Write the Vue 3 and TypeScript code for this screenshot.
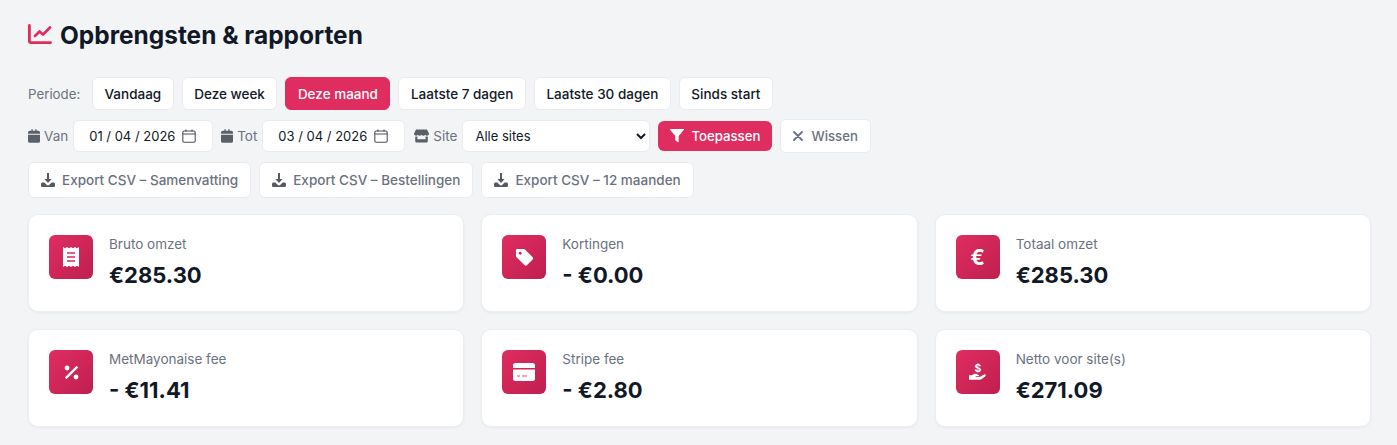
<script setup lang="ts">
const periods = [
  { label: 'Vandaag', active: false },
  { label: 'Deze week', active: false },
  { label: 'Deze maand', active: true },
  { label: 'Laatste 7 dagen', active: false },
  { label: 'Laatste 30 dagen', active: false },
  { label: 'Sinds start', active: false },
]

const exports = ['Export CSV – Samenvatting', 'Export CSV – Bestellingen', 'Export CSV – 12 maanden']

const stats = [
  { key: 'receipt', label: 'Bruto omzet', value: '€285.30' },
  { key: 'tag', label: 'Kortingen', value: '- €0.00' },
  { key: 'euro', label: 'Totaal omzet', value: '€285.30' },
  { key: 'percent', label: 'MetMayonaise fee', value: '- €11.41' },
  { key: 'card', label: 'Stripe fee', value: '- €2.80' },
  { key: 'hand', label: 'Netto voor site(s)', value: '€271.09' },
]
</script>

<template>
  <div class="page">
    <h1 class="title">
      <svg class="title-icon" viewBox="0 0 24 20" fill="none" stroke="currentColor" stroke-width="2.8" stroke-linecap="round" stroke-linejoin="round">
        <path d="M1.4 1.4v15.7a1.5 1.5 0 0 0 1.5 1.5h19.7" />
        <path d="M7 12l4.5-4.5 3.5 3 7-7" />
      </svg>
      Opbrengsten &amp; rapporten
    </h1>

    <div class="row period-row">
      <span class="muted">Periode:</span>
      <button v-for="p in periods" :key="p.label" class="pill" :class="{ active: p.active }">{{ p.label }}</button>
    </div>

    <div class="row filter-row">
      <label class="field-label">
        <svg class="label-icon" viewBox="0 0 14 16" fill="currentColor"><path d="M4 0h1.5v2h3V0H10v2h2a2 2 0 0 1 2 2v1.5H0V4a2 2 0 0 1 2-2h2zM0 6.5h14V14a2 2 0 0 1-2 2H2a2 2 0 0 1-2-2z" /></svg>
        Van
      </label>
      <div class="date-input">
        <span>01 / 04 / 2026</span>
        <svg class="cal" viewBox="0 0 14 14" fill="none" stroke="currentColor" stroke-width="1.1"><rect x="0.8" y="2" width="12.4" height="11.2" rx="1.4" /><path d="M0.8 5h12.4M4 0.5V2.5M10 0.5V2.5" /></svg>
      </div>
      <label class="field-label">
        <svg class="label-icon" viewBox="0 0 14 16" fill="currentColor"><path d="M4 0h1.5v2h3V0H10v2h2a2 2 0 0 1 2 2v1.5H0V4a2 2 0 0 1 2-2h2zM0 6.5h14V14a2 2 0 0 1-2 2H2a2 2 0 0 1-2-2z" /></svg>
        Tot
      </label>
      <div class="date-input narrow">
        <span>03 / 04 / 2026</span>
        <svg class="cal" viewBox="0 0 14 14" fill="none" stroke="currentColor" stroke-width="1.1"><rect x="0.8" y="2" width="12.4" height="11.2" rx="1.4" /><path d="M0.8 5h12.4M4 0.5V2.5M10 0.5V2.5" /></svg>
      </div>
      <label class="field-label">
        <svg class="label-icon store" viewBox="0 0 16 14" fill="currentColor"><path d="M2.2 0h11.6L16 4.2C16 5.6 15 6.6 13.8 6.6c-.8 0-1.4-.4-1.9-1-.4.6-1.100 1-1.900 1s-1.500-.4-2-1c-.5.6-1.200 1-2 1s-1.500-.4-1.900-1c-.5.6-1.100 1-1.900 1C1 6.6 0 5.6 0 4.200zM1.300 7.600c.3.100.6.100.9.100.5 0 1-.1 1.400-.4v3.200h8.800V7.300c.4.300.9.400 1.400.4.300 0 .6 0 .9-.1v4.900a1.500 1.500 0 0 1-1.500 1.500H2.800a1.500 1.500 0 0 1-1.500-1.500z" /></svg>
        Site
      </label>
      <select class="select-box">
        <option>Alle sites</option>
      </select>
      <button class="apply">
        <svg class="btn-icon" viewBox="0 0 14 14" fill="currentColor"><path d="M.4 0h13.200c.4 0 .5.400.3.700L8.700 7v5.800c0 .4-.4.600-.7.400l-2.400-1.700a.6.600 0 0 1-.3-.5V7L.1.700C-.1.400 0 0 .4 0z" /></svg>
        Toepassen
      </button>
      <button class="clear">
        <svg class="x-icon" viewBox="0 0 10 10" fill="none" stroke="currentColor" stroke-width="1.8" stroke-linecap="round"><path d="M1 1l8 8M9 1l-8 8" /></svg>
        Wissen
      </button>
    </div>

    <div class="row export-row">
      <button v-for="e in exports" :key="e" class="export">
        <svg class="dl-icon" viewBox="0 0 14 14" fill="currentColor"><path d="M6 0h2v6h2.600L7 10 3.400 6H6z" /><path d="M0 11.200C0 10.300.7 9.600 1.600 9.600h1.800l2.200 2.100a2 2 0 0 0 2.800 0l2.200-2.100h1.800c.9 0 1.600.7 1.600 1.600v1.200c0 .9-.7 1.600-1.600 1.600H1.600C.7 14 0 13.300 0 12.400z" /></svg>
        {{ e }}
      </button>
    </div>

    <div class="stats">
      <div v-for="s in stats" :key="s.label" class="card">
        <div class="stat-icon">
          <svg v-if="s.key === 'receipt'" class="glyph receipt" viewBox="0 0 16 20"><path fill="#fff" d="M0 0l2 1.200L4 0l2 1.200L8 0l2 1.200L12 0l2 1.200L16 0v20l-2-1.200L12 20l-2-1.200L8 20l-2-1.200L4 20l-2-1.200L0 20z" /><path stroke="#d42a5e" stroke-width="1.4" d="M4 6h8M4 10h8M4 14h8" /></svg>
          <svg v-else-if="s.key === 'tag'" class="glyph tag" viewBox="0 0 20 20"><path fill="#fff" d="M1 2.500A1.500 1.500 0 0 1 2.500 1h6.700c.5 0 1 .2 1.300.6l7.900 7.900a2 2 0 0 1 0 2.800l-5.700 5.700a2 2 0 0 1-2.800 0L1.600 9.700A2 2 0 0 1 1 8.300z" /><circle cx="5.5" cy="5.500" r="1.5" fill="#d42a5e" /></svg>
          <span v-else-if="s.key === 'euro'" class="euro">€</span>
          <svg v-else-if="s.key === 'percent'" class="glyph percent" viewBox="0 0 15 15" fill="#fff"><circle cx="3" cy="3" r="2.4" /><circle cx="12" cy="12" r="2.4" /><path d="M12.600 0.800l1.600 1.600L2.400 14.200.8 12.600z" /></svg>
          <svg v-else-if="s.key === 'card'" class="glyph wide" viewBox="0 0 22 18"><path fill="#fff" d="M2.500 0h17A2.500 2.500 0 0 1 22 2.500V5H0V2.500A2.500 2.500 0 0 1 2.500 0zM0 6.500h22v9a2.500 2.500 0 0 1-2.500 2.500h-17A2.500 2.500 0 0 1 0 15.500z" /><path stroke="#e58aa6" stroke-width="1.5" d="M4 13h3M9 13h5" /></svg>
          <svg v-else class="glyph wide" viewBox="0 0 22 20" fill="#fff">
            <path d="M1 13.500h3.200l2.300-1.200c.9-.5 1.900-.5 2.800-.1l2.500 1c.8.300.6 1.600-.4 1.600H8.500v.8h4.200l5-2.800c1.200-.7 2.800.8 1.500 2l-4.500 3.200c-.5.300-1 .5-1.600.5H1z" />
            <text x="11" y="9.5" text-anchor="middle" font-size="11.5" font-weight="700" font-family="Inter, sans-serif">$</text>
          </svg>
        </div>
        <div class="stat-body">
          <div class="stat-label">{{ s.label }}</div>
          <div class="stat-value">{{ s.value }}</div>
        </div>
      </div>
    </div>
  </div>
</template>

<style>
html,
body {
  margin: 0;
  background: #f3f4f6;
}
</style>

<style scoped>
.page {
  box-sizing: border-box;
  width: 1397px;
  height: 445px;
  padding: 20px 26px 0 28px;
  font-family: Inter, "Liberation Sans", sans-serif;
  background: #f3f4f6;
  color: #4b5563;
  overflow: hidden;
}

.title {
  display: flex;
  align-items: center;
  gap: 8px;
  height: 30px;
  margin: 0 0 27px;
  font-size: 24.45px;
  font-weight: 700;
  color: #111827;
}

.title-icon {
  width: 24px;
  height: 20px;
  color: #e02d60;
  margin-top: -3px;
}

.row {
  display: flex;
  align-items: center;
}

.period-row {
  gap: 8px;
  height: 33px;
  margin-bottom: 9px;
}

.muted {
  width: 56px;
  font-size: 13.3px;
  color: #6b7280;
}

button {
  font-family: inherit;
  cursor: pointer;
}

.pill {
  height: 33px;
  padding: 0 11.5px;
  font-size: 13.5px;
  font-weight: 500;
  color: #111827;
  background: #fff;
  border: 1px solid #e9ebef;
  border-radius: 6px;
}

.pill.active {
  color: #fff;
  background: #e02d60;
  border-color: #e02d60;
}

.filter-row {
  height: 34px;
  margin-bottom: 9px;
}

.field-label {
  display: flex;
  align-items: center;
  gap: 4px;
  margin-right: 5px;
  font-size: 13.5px;
  color: #6b7280;
}

.label-icon {
  width: 12px;
  height: 14px;
  color: #5b5f68;
}

.label-icon.store {
  width: 15px;
  height: 14px;
}

.date-input {
  display: flex;
  align-items: center;
  justify-content: space-between;
  box-sizing: border-box;
  width: 140px;
  height: 32px;
  margin-right: 8px;
  padding: 0 16px 0 15px;
  font-size: 13px;
  color: #111827;
  background: #fff;
  border: 1px solid #e9ebef;
  border-radius: 6px;
}

.date-input.narrow {
  width: 143px;
  margin-right: 9px;
}

.cal {
  width: 14px;
  height: 14px;
  color: #4b4f57;
}

.select-box {
  box-sizing: border-box;
  width: 188px;
  height: 32px;
  margin-right: 8px;
  padding: 0 8px;
  font-family: inherit;
  font-size: 13px;
  color: #111827;
  background: #fff;
  border: 1px solid #e9ebef;
  border-radius: 6px;
}

.apply {
  display: flex;
  align-items: center;
  gap: 7px;
  height: 30px;
  margin-right: 8px;
  padding: 0 12px;
  font-size: 13.2px;
  font-weight: 500;
  color: #fff;
  background: #e02d60;
  border: 0;
  border-radius: 6px;
}

.btn-icon {
  width: 14px;
  height: 14px;
}

.clear {
  display: flex;
  align-items: center;
  gap: 8px;
  height: 34px;
  padding: 0 12px;
  font-size: 13.2px;
  font-weight: 500;
  color: #6b7280;
  background: #fff;
  border: 1px solid #e9ebef;
  border-radius: 6px;
}

.x-icon {
  width: 10px;
  height: 10px;
}

.export-row {
  gap: 8px;
  height: 36px;
  margin-bottom: 16px;
}

.export {
  display: flex;
  align-items: center;
  gap: 7px;
  height: 36px;
  padding: 0 12px;
  font-size: 13.5px;
  font-weight: 500;
  color: #6b7280;
  background: #fff;
  border: 1px solid #e9ebef;
  border-radius: 6px;
}

.dl-icon {
  width: 14px;
  height: 14px;
  color: #555a63;
}

.stats {
  display: grid;
  grid-template-columns: repeat(3, 1fr);
  gap: 17px;
}

.card {
  display: flex;
  gap: 16px;
  box-sizing: border-box;
  height: 98px;
  padding: 20px;
  background: #fff;
  border: 1px solid #eceef1;
  border-radius: 10px;
  box-shadow: 0 1px 3px rgba(0, 0, 0, 0.05);
}

.stat-icon {
  display: flex;
  align-items: center;
  justify-content: center;
  flex-shrink: 0;
  width: 44px;
  height: 44px;
  border-radius: 6px;
  background: linear-gradient(135deg, #e02d60, #be1f4f);
}

.glyph {
  width: 16px;
  height: 16px;
}

.glyph.receipt {
  width: 16px;
  height: 20px;
}

.glyph.tag {
  width: 19px;
  height: 19px;
}

.glyph.percent {
  width: 15px;
  height: 15px;
}

.glyph.wide {
  width: 22px;
  height: 18px;
}

.euro {
  font-size: 21px;
  font-weight: 700;
  color: #fff;
}

.stat-label {
  font-size: 13.5px;
  line-height: 18px;
  color: #6b7280;
}

.stat-value {
  margin-top: 7px;
  font-size: 22px;
  line-height: 30px;
  font-weight: 700;
  color: #111827;
}
</style>
